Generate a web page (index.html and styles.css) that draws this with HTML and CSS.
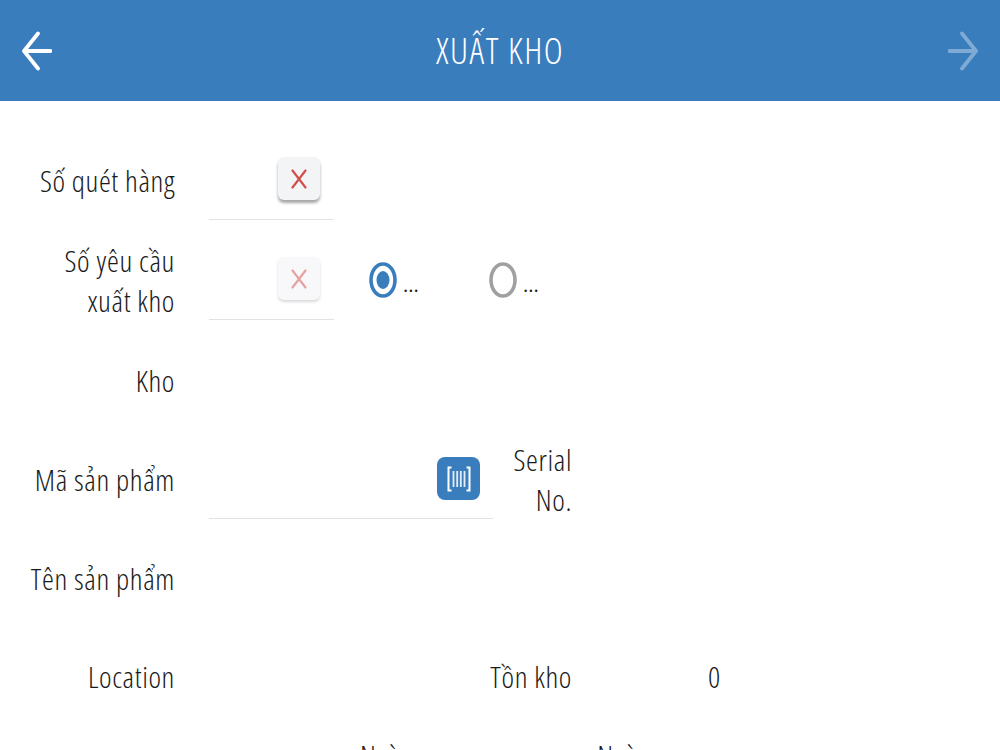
FILE: index.html
```html
<!DOCTYPE html>
<html lang="vi">
<head>
<meta charset="utf-8">
<title>Xuất kho</title>
<link rel="stylesheet" href="styles.css">
</head>
<body>
<div class="page">
  <header class="bar">
    <svg class="nav" width="30" height="40" viewBox="0 0 30 40"><path d="M28.500 20H2M16 2.500 2 20l14 17.500"/></svg>
    <h1 class="title">XUẤT KHO</h1>
    <svg class="nav nav-off" width="30" height="40" viewBox="0 0 30 40"><path d="M1.500 20H28M14 2.500 28 20 14 37.500"/></svg>
  </header>
  <main class="form">
    <div class="row">
      <div class="lab">Số quét hàng</div>
      <div class="field">
        <button class="clear"><svg width="16" height="20" viewBox="0 0 16 20"><path d="M1.500 1.500l13 17M14.500 1.500l-13 17"/></svg></button>
      </div>
    </div>
    <div class="row">
      <div class="lab lab-narrow">Số yêu cầu xuất kho</div>
      <div class="field">
        <button class="clear clear-off"><svg width="16" height="20" viewBox="0 0 16 20"><path d="M1.500 1.500l13 17M14.500 1.500l-13 17"/></svg></button>
      </div>
      <div class="radios">
        <div class="radio"><svg width="28" height="36" viewBox="0 0 28 36"><ellipse class="ring on" cx="14" cy="18" rx="12" ry="16"/><ellipse class="dot" cx="14" cy="18" rx="6.500" ry="9"/></svg><span class="dots">...</span></div>
        <div class="radio"><svg width="28" height="36" viewBox="0 0 28 36"><ellipse class="ring" cx="14" cy="18" rx="12" ry="16"/></svg><span class="dots">...</span></div>
      </div>
    </div>
    <div class="row row-short">
      <div class="lab">Kho</div>
    </div>
    <div class="row">
      <div class="lab">Mã sản phẩm</div>
      <div class="field field-wide">
        <button class="scan"><svg width="24" height="26" viewBox="0 0 24 26"><path class="scan-frame" d="M4.500 1.500H1.500v23h3M19.500 1.500h3v23h-3"/><path class="scan-bars" d="M6.500 5v16M10.200 5v16M13.800 5v16M17.500 5v16"/></svg></button>
      </div>
      <div class="lab lab-mid">Serial No.</div>
    </div>
    <div class="row row-tight">
      <div class="lab">Tên sản phẩm</div>
    </div>
    <div class="row row-tight">
      <div class="lab">Location</div>
      <div class="lab lab-stock">Tồn kho</div>
      <div class="value">0</div>
    </div>
    <div class="row">
      <div class="lab lab-date">Ngày</div>
      <div class="lab lab-date2">Ngày</div>
    </div>
  </main>
</div>
</body>
</html>
```
FILE: styles.css
```css
* { box-sizing: border-box; }
html, body { margin: 0; height: 100%; overflow: hidden; background: #fff; }
.page { width: 1000px; height: 750px; overflow: hidden; font-family: "Open Sans", "Noto Sans", sans-serif; font-weight: 300; font-stretch: 75%; color: #1a1a1a; }
.bar { height: 101px; background: #3a7dbd; display: flex; align-items: center; justify-content: space-between; padding: 0 22px 0 22px; }
.nav { fill: none; stroke: #fff; stroke-width: 3.800; stroke-linecap: round; stroke-linejoin: round; }
.nav-off { opacity: .35; }
.title { margin: 0; font-size: 36px; font-weight: 300; letter-spacing: 1.500px; color: #fff; line-height: 1; }
.form { padding-top: 30px; }
.row { height: 100px; display: flex; align-items: center; }
.row-short { height: 99px; }
.row-tight { height: 98px; }
.lab { width: 175px; flex: none; text-align: right; font-size: 30px; letter-spacing: .6px; line-height: 40px; }
.lab-narrow { padding-left: 40px; }
.field { margin-left: 34px; width: 125px; height: 78px; flex: none; display: flex; justify-content: flex-end; align-items: flex-start; padding: 16px 14px 0 0; border-bottom: 1px solid #e2e2e2; }
.field-wide { width: 284px; padding-right: 13px; }
.clear { width: 42px; height: 43px; margin-top: -1px; border: 0; padding: 0; background: #f3f4f6; border-radius: 6px; box-shadow: 0 3px 3px rgba(0,0,0,.35); display: flex; align-items: center; justify-content: center; }
.clear svg { fill: none; stroke: #d2504c; stroke-width: 2.200; stroke-linecap: round; }
.clear-off { background: #f8f8fa; box-shadow: 0 2px 3px rgba(0,0,0,.15); }
.clear-off svg { opacity: .5; }
.radios { margin: 0 0 2px 35px; display: flex; }
.radio { width: 120px; display: flex; align-items: center; gap: 6px; }
.ring { fill: none; stroke: #a0a0a0; stroke-width: 3.600; }
.ring.on { stroke: #3a7dbd; }
.dot { fill: #3a7dbd; }
.dots { font-size: 20px; font-weight: 400; font-stretch: 100%; line-height: 20px; padding-top: 9px; }
.scan { width: 43px; height: 43px; border: 0; padding: 0; background: #3a7dbd; border-radius: 8px; display: flex; align-items: center; justify-content: center; }
.scan-frame { fill: none; stroke: #fff; stroke-width: 2; }
.scan-bars { fill: none; stroke: #e4eef8; stroke-width: 1.800; }
.lab-mid { width: 79px; }
.lab-stock { width: 397px; }
.value { margin-left: 136px; font-size: 30px; letter-spacing: .6px; line-height: 40px; }
.lab-date { width: auto; margin-left: 360px; align-self: flex-start; margin-top: 10px; }
.lab-date2 { width: auto; margin-left: 187px; align-self: flex-start; margin-top: 10px; }
```
